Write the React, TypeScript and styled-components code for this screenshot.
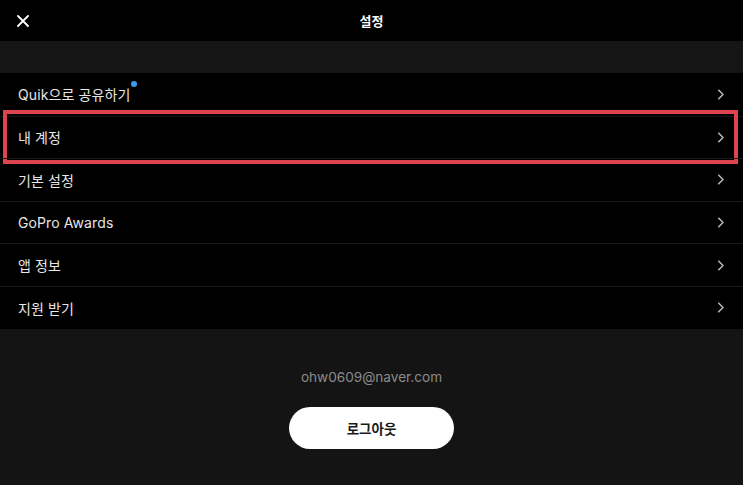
import React from "react";
import styled, { createGlobalStyle } from "styled-components";

const GlobalStyle = createGlobalStyle`
  html, body {
    margin: 0;
    padding: 0;
    background: #141414;
  }
  body {
    font-family: Inter, "Noto Sans CJK KR", "Noto Sans", sans-serif;
    -webkit-font-smoothing: antialiased;
  }
`;

const Page = styled.div`
  width: 743px;
  height: 485px;
  background: #141414;
  display: flex;
  flex-direction: column;
  overflow: hidden;
`;

const Header = styled.header`
  height: 41px;
  background: #000;
  display: grid;
  grid-template-columns: 60px 1fr 60px;
  align-items: center;
`;

const CloseButton = styled.button`
  background: none;
  border: none;
  padding: 0 0 0 17px;
  height: 41px;
  display: flex;
  align-items: center;
  justify-content: flex-start;
  color: #fff;
  cursor: pointer;
`;

const Title = styled.h1`
  margin: 0;
  text-align: center;
  color: #fff;
  font-size: 13px;
  font-weight: 700;
  font-family: "Noto Sans CJK KR", sans-serif;
  line-height: 41px;
`;

const Band = styled.div`
  height: 32px;
  background: #151515;
`;

const List = styled.ul`
  margin: 0;
  padding: 0;
  list-style: none;
  background: #000;
`;

const Row = styled.li<{ $highlight?: boolean; $first?: boolean }>`
  position: relative;
  box-sizing: border-box;
  height: 42.6px;
  display: flex;
  align-items: center;
  justify-content: space-between;
  padding: 0 18px;
  border-top: ${(p) => (p.$first ? "none" : "1px solid #171717")};
  color: #e6e6e6;
  font-size: 14px;
  &::after {
    content: "";
    display: ${(p) => (p.$highlight ? "block" : "none")};
    position: absolute;
    left: 3px;
    right: 5px;
    top: -7px;
    bottom: -6px;
    border: 4px solid #dc4550;
    pointer-events: none;
  }
`;

const Label = styled.span`
  position: relative;
  font-family: Inter, "Noto Sans CJK KR", sans-serif;
  font-weight: 400;
  letter-spacing: 0.1px;
`;

const Dot = styled.span`
  position: absolute;
  right: -7px;
  top: -3px;
  width: 6px;
  height: 6px;
  border-radius: 50%;
  background: #3d9cf0;
`;

const Chevron = () => (
  <svg width="8" height="11" viewBox="0 0 8 11" fill="none">
    <path
      d="M1.8 1.2 L6 5.5 L1.8 9.8"
      stroke="#b4b4b4"
      strokeWidth="1.6"
      strokeLinecap="round"
      strokeLinejoin="round"
    />
  </svg>
);

const Footer = styled.div`
  flex: 1;
  background: #141414;
  display: flex;
  flex-direction: column;
  align-items: center;
  padding-top: 38px;
`;

const Email = styled.div`
  color: #8b8b8b;
  font-size: 13.6px;
  font-family: Inter, sans-serif;
  line-height: 20px;
`;

const LogoutButton = styled.button`
  margin-top: 20px;
  width: 165px;
  height: 42px;
  border-radius: 21px;
  border: none;
  background: #fff;
  color: #1a1a1a;
  font-size: 13.5px;
  font-weight: 700;
  font-family: "Noto Sans CJK KR", sans-serif;
  cursor: pointer;
`;

const items = [
  { label: "Quik으로 공유하기", dot: true },
  { label: "내 계정", highlight: true },
  { label: "기본 설정" },
  { label: "GoPro Awards" },
  { label: "앱 정보" },
  { label: "지원 받기" },
];

export default function App() {
  return (
    <>
      <GlobalStyle />
      <Page>
        <Header>
          <CloseButton aria-label="닫기">
            <svg width="12" height="12" viewBox="0 0 12 12">
              <path
                d="M1 1 L11 11 M11 1 L1 11"
                stroke="#fff"
                strokeWidth="1.8"
                strokeLinecap="round"
              />
            </svg>
          </CloseButton>
          <Title>설정</Title>
          <div />
        </Header>
        <Band />
        <List>
          {items.map((it, i) => (
            <Row key={it.label} $first={i === 0} $highlight={it.highlight}>
              <Label>
                {it.label}
                {it.dot && <Dot />}
              </Label>
              <Chevron />
            </Row>
          ))}
        </List>
        <Footer>
          <Email>ohw0609@naver.com</Email>
          <LogoutButton>로그아웃</LogoutButton>
        </Footer>
      </Page>
    </>
  );
}
